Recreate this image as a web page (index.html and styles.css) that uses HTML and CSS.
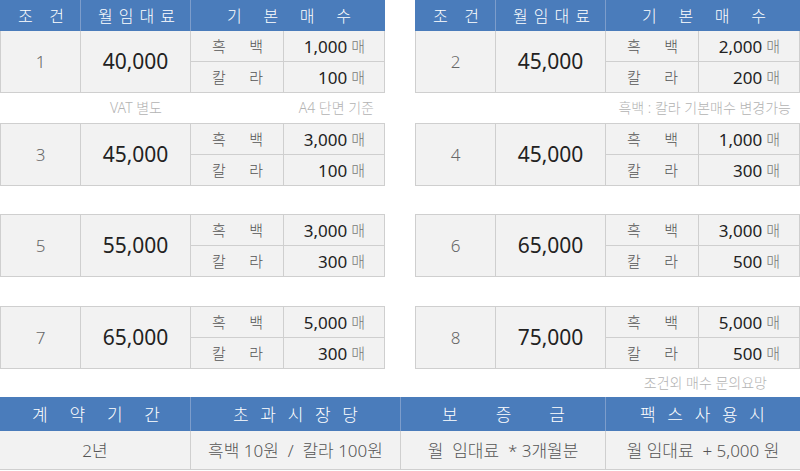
FILE: index.html
```html
<!DOCTYPE html>
<html lang="ko">
<head>
<meta charset="utf-8">
<title>렌탈 조건</title>
<link rel="stylesheet" href="styles.css">
</head>
<body>
<div class="page">
  <div class="sides">
    <div class="side">
      <div class="head">
        <div class="h"><span>조</span><span>건</span></div>
        <div class="h h2"><span>월</span><span>임</span><span>대</span><span>료</span></div>
        <div class="h h3"><span>기</span><span>본</span><span>매</span><span>수</span></div>
      </div>
      <div class="block first">
        <div class="c num">1</div>
        <div class="c price">40,000</div>
        <div class="c kind"><span>흑</span><span>백</span></div>
        <div class="c qty"><b>1,000</b><i>매</i></div>
        <div class="c kind"><span>칼</span><span>라</span></div>
        <div class="c qty"><b>100</b><i>매</i></div>
      </div>
      <div class="note n1">
        <span class="vat">VAT 별도</span>
        <span class="rt">A4 단면 기준</span>
      </div>
      <div class="block">
        <div class="c num">3</div>
        <div class="c price">45,000</div>
        <div class="c kind"><span>흑</span><span>백</span></div>
        <div class="c qty"><b>3,000</b><i>매</i></div>
        <div class="c kind"><span>칼</span><span>라</span></div>
        <div class="c qty"><b>100</b><i>매</i></div>
      </div>
      <div class="gap g1"></div>
      <div class="block">
        <div class="c num">5</div>
        <div class="c price">55,000</div>
        <div class="c kind"><span>흑</span><span>백</span></div>
        <div class="c qty"><b>3,000</b><i>매</i></div>
        <div class="c kind"><span>칼</span><span>라</span></div>
        <div class="c qty"><b>300</b><i>매</i></div>
      </div>
      <div class="gap g2"></div>
      <div class="block">
        <div class="c num">7</div>
        <div class="c price">65,000</div>
        <div class="c kind"><span>흑</span><span>백</span></div>
        <div class="c qty"><b>5,000</b><i>매</i></div>
        <div class="c kind"><span>칼</span><span>라</span></div>
        <div class="c qty"><b>300</b><i>매</i></div>
      </div>
      <div class="note n2"></div>
    </div>

    <div class="side right">
      <div class="head">
        <div class="h"><span>조</span><span>건</span></div>
        <div class="h h2"><span>월</span><span>임</span><span>대</span><span>료</span></div>
        <div class="h h3"><span>기</span><span>본</span><span>매</span><span>수</span></div>
      </div>
      <div class="block first">
        <div class="c num">2</div>
        <div class="c price">45,000</div>
        <div class="c kind"><span>흑</span><span>백</span></div>
        <div class="c qty"><b>2,000</b><i>매</i></div>
        <div class="c kind"><span>칼</span><span>라</span></div>
        <div class="c qty"><b>200</b><i>매</i></div>
      </div>
      <div class="note n1 end">
        <span class="rt">흑백 : 칼라 기본매수 변경가능</span>
      </div>
      <div class="block">
        <div class="c num">4</div>
        <div class="c price">45,000</div>
        <div class="c kind"><span>흑</span><span>백</span></div>
        <div class="c qty"><b>1,000</b><i>매</i></div>
        <div class="c kind"><span>칼</span><span>라</span></div>
        <div class="c qty"><b>300</b><i>매</i></div>
      </div>
      <div class="gap g1"></div>
      <div class="block">
        <div class="c num">6</div>
        <div class="c price">65,000</div>
        <div class="c kind"><span>흑</span><span>백</span></div>
        <div class="c qty"><b>3,000</b><i>매</i></div>
        <div class="c kind"><span>칼</span><span>라</span></div>
        <div class="c qty"><b>500</b><i>매</i></div>
      </div>
      <div class="gap g2"></div>
      <div class="block">
        <div class="c num">8</div>
        <div class="c price">75,000</div>
        <div class="c kind"><span>흑</span><span>백</span></div>
        <div class="c qty"><b>5,000</b><i>매</i></div>
        <div class="c kind"><span>칼</span><span>라</span></div>
        <div class="c qty"><b>500</b><i>매</i></div>
      </div>
      <div class="note n2 end">
        <span class="rt rt2">조건외 매수 문의요망</span>
      </div>
    </div>
  </div>

  <div class="bottom">
    <div class="bh b1"><span>계</span><span>약</span><span>기</span><span>간</span></div>
    <div class="bh b2"><span>초</span><span>과</span><span>시</span><span>장</span><span>당</span></div>
    <div class="bh b3"><span>보</span><span>증</span><span>금</span></div>
    <div class="bh b4"><span>팩</span><span>스</span><span>사</span><span>용</span><span>시</span></div>
    <div class="bd">2년</div>
    <div class="bd">흑백 10원  /  칼라 100원</div>
    <div class="bd">월  임대료  * 3개월분</div>
    <div class="bd">월 임대료  + 5,000 원</div>
  </div>
</div>
</body>
</html>
```

FILE: styles.css
```css
* { box-sizing: border-box; }
html, body { margin: 0; padding: 0; background: #ffffff; }
body {
  font-family: "Noto Sans", "Noto Sans CJK KR", sans-serif;
  color: #333;
}
.page { width: 800px; }
.sides {
  display: grid;
  grid-template-columns: 385px 385px;
  column-gap: 30px;
}
.side { display: flex; flex-direction: column; }

.head {
  display: grid;
  grid-template-columns: 81px 110px 194px;
  height: 31px;
  background: #4a7cbb;
}
.h {
  display: flex;
  align-items: center;
  justify-content: space-between;
  padding: 0 16px 0 18px;
  color: #ffffff;
  font-size: 16px;
  font-weight: 300;
  line-height: 1;
  border-right: 1px solid #7d9dcb;
}
.h2 { padding: 0 15px 0 17px; }
.h3 { padding: 0 34px 0 36px; border-right: none; }

.block {
  display: grid;
  grid-template-columns: 80px 110px 93px 101px;
  grid-template-rows: 31px 31px;
  border-left: 1px solid #cfcfcf;
  border-top: 1px solid #cfcfcf;
  background: #f2f2f2;
}
.block.first { border-top: none; }
.c {
  border-right: 1px solid #cfcfcf;
  border-bottom: 1px solid #cfcfcf;
  display: flex;
  align-items: center;
  line-height: 1;
}
.num {
  grid-row: span 2;
  justify-content: center;
  font-size: 17px;
  color: #666;
  font-weight: 300;
}
.price {
  grid-row: span 2;
  justify-content: center;
  font-size: 21px;
  color: #222;
}
.kind {
  justify-content: space-between;
  padding: 0 20px 0 21px;
  font-size: 15px;
  font-weight: 300;
  color: #555;
}
.qty {
  justify-content: flex-end;
  padding-right: 19px;
  gap: 4px;
}
.qty b { font-weight: 400; font-size: 17px; color: #222; }
.qty i { font-style: normal; font-size: 15px; font-weight: 300; color: #777; }

.note {
  display: grid;
  grid-template-columns: 81px 110px 194px;
  align-items: center;
  font-size: 14px;
  font-weight: 300;
  color: #b3b3b3;
  line-height: 1;
}
.n1 { height: 30px; }
.n2 { height: 28px; }
.note .vat { grid-column: 2; text-align: center; }
.note .rt { grid-column: 3; text-align: right; padding-right: 11px; white-space: nowrap; }
.note.end .rt { padding-right: 9px; }
.note.end .rt2 { padding-right: 33px; }
.gap.g1 { height: 28px; }
.gap.g2 { height: 29px; }

.bottom {
  display: grid;
  grid-template-columns: 191px 210px 205px 194px;
  grid-template-rows: 34px 39px;
}
.bh {
  background: #4a7cbb;
  color: #ffffff;
  font-size: 17px;
  font-weight: 300;
  line-height: 1;
  display: flex;
  align-items: center;
  justify-content: space-between;
  border-right: 1px solid #7d9dcb;
}
.b1 { padding: 0 30px 0 32px; }
.b2 { padding: 0 42px 0 42px; }
.b3 { padding: 0 40px 0 41px; }
.b4 { padding: 0 35px 0 34px; border-right: none; }
.bd {
  background: #f2f2f2;
  border-right: 1px solid #cfcfcf;
  border-bottom: 1px solid #cfcfcf;
  display: flex;
  align-items: center;
  justify-content: center;
  font-size: 17px;
  font-weight: 300;
  color: #555;
  white-space: pre;
  line-height: 1;
}
.bottom .bd:nth-child(8) { border-right: none; }
```
